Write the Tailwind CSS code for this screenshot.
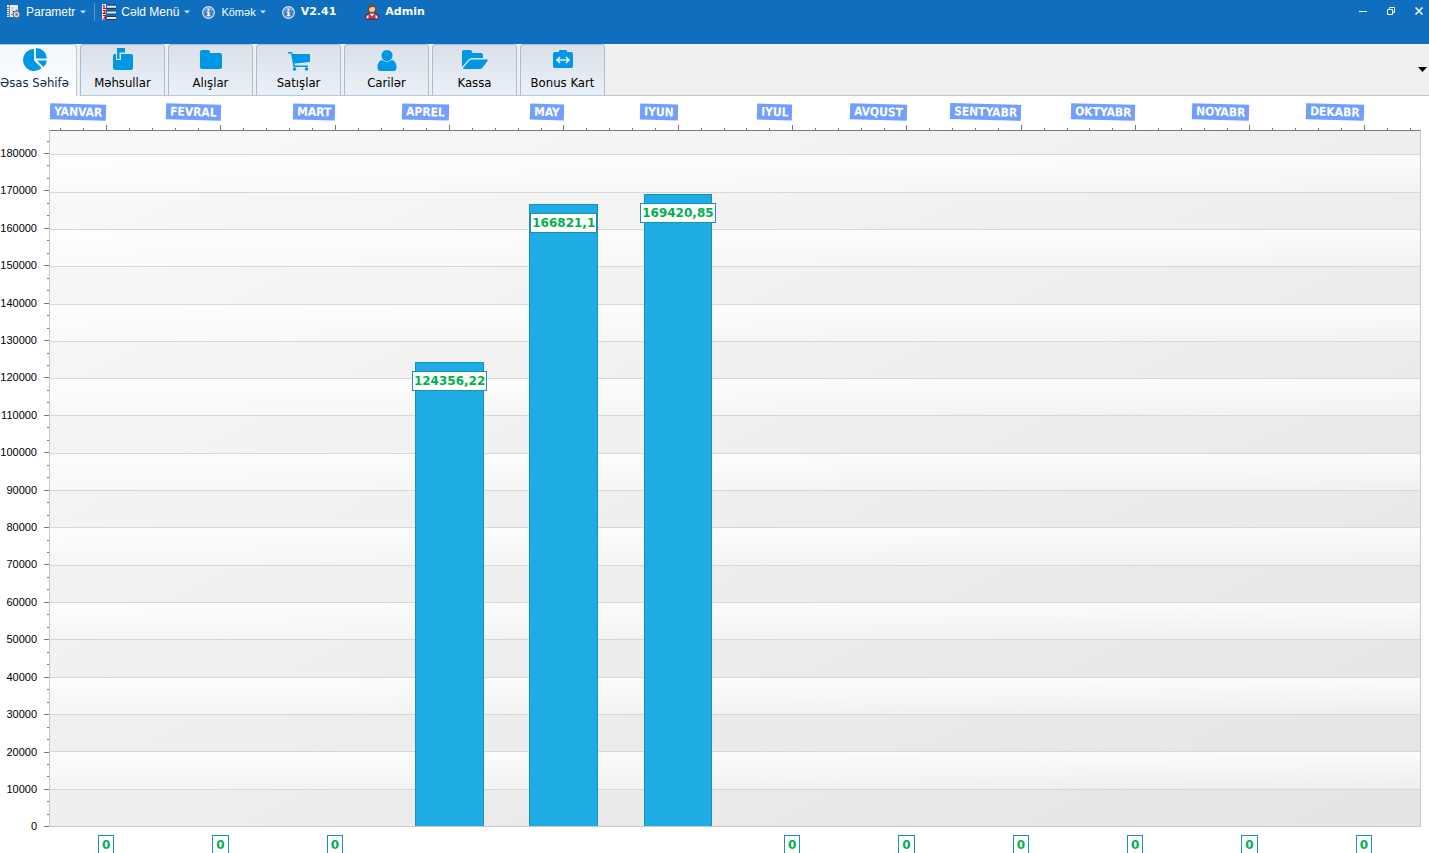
<!DOCTYPE html>
<html lang="az">
<head>
<meta charset="utf-8">
<title>Əsas Səhifə</title>
<script src="https://cdn.jsdelivr.net/npm/@tailwindcss/browser@4"></script>
</head>
<body class="h-screen overflow-hidden flex flex-col bg-white font-['DejaVu_Sans_Condensed','DejaVu_Sans',sans-serif] text-[12px] text-black">

<header class="h-11 shrink-0 bg-[#106ebe] text-white flex items-start justify-between">
  <nav class="flex items-center h-6 pl-1.5 font-['Liberation_Sans',sans-serif] text-[12px]">
    <button class="flex items-center h-full">
      <svg class="w-4 h-4 mr-1" viewBox="0 0 16 16"><path d="M1 1h11v12H1z" fill="#edf1f7"/><path d="M3.500 1v12M1 3.500h2M1 5.500h2M1 7.500h2M1 9.500h2M1 11.500h2" stroke="#6c7f9c" stroke-width="1"/><path d="M5.500 4h2M5.500 6h1" stroke="#9aa9bd"/><path d="M10.500 5.500v2m0 6v2m-5-5h2m6 0h2m-8.500-3.500 1.400 1.400m4.200 4.200 1.400 1.400m0-7-1.400 1.400m-4.200 4.200-1.400 1.400" stroke="#4f5d73" stroke-width="1.500"/><circle cx="10.500" cy="10.500" r="3.300" fill="#dce3ec" stroke="#5b6b82"/><circle cx="10.500" cy="10.500" r="1.300" fill="#58708f"/></svg>
      Parametr
      <svg class="w-[6px] h-[4px] ml-[5px]" viewBox="0 0 6 4"><path d="M0 .5h6L3 3.500z" fill="#cfe0f2"/></svg>
    </button>
    <span class="w-px h-[18px] bg-[#5a9bd5] ml-2 mr-[7px]"></span>
    <button class="flex items-center h-full">
      <svg class="w-[14px] h-4 mr-[5px]" viewBox="0 0 14 16" fill="none"><path d="M0 0h4v16H0z" fill="#f4dfe3"/><path d="M5 1h9M5 4.500h9M5 7h9M5 10h9M5 12.500h9M5 15.500h9" stroke="#26384f" stroke-width="1"/><path d="M5 2.700h9M5 8.500h9M5 14h9" stroke="#dfe9f5" stroke-width="2"/><path d="M1 1.500h1V4M1 4.500h3M1 6.500h2v1.200L1.500 9.500H4M1 11.500h2.500v1.800H2h1.500v1.900H1" stroke="#c1121f" stroke-width="1.200"/></svg>
      Cəld Menü
      <svg class="w-[6px] h-[4px] ml-[5px]" viewBox="0 0 6 4"><path d="M0 .5h6L3 3.500z" fill="#cfe0f2"/></svg>
    </button>
    <button class="flex items-center h-full ml-3 text-[11px]">
      <svg class="w-[13px] h-[13px] mr-[6px]" viewBox="0 0 14 14"><circle cx="7" cy="7" r="6.300" fill="#4a80c8" stroke="#dce7f5" stroke-width="1.300"/><path d="M3 5a4.500 4.500 0 0 1 8 0" stroke="#a4c2e8" fill="none"/><path d="M6 3h2v2H6zM5 6h3v4h1v1H5v-1h1V7H5z" fill="#fff"/></svg>
      Kömək
      <svg class="w-[6px] h-[4px] ml-1" viewBox="0 0 6 4"><path d="M0 .5h6L3 3.500z" fill="#cfe0f2"/></svg>
    </button>
    <button class="flex items-center h-full ml-4 font-bold text-[11px] font-['DejaVu_Sans',sans-serif]">
      <svg class="w-[13px] h-[13px] mr-[6px]" viewBox="0 0 14 14"><circle cx="7" cy="7" r="6.300" fill="#4a80c8" stroke="#dce7f5" stroke-width="1.300"/><path d="M3 5a4.500 4.500 0 0 1 8 0" stroke="#a4c2e8" fill="none"/><path d="M6 3h2v2H6zM5 6h3v4h1v1H5v-1h1V7H5z" fill="#fff"/></svg>
      V2.41
    </button>
    <button class="flex items-center h-full ml-7 font-bold text-[11px] font-['DejaVu_Sans',sans-serif]">
      <svg class="w-4 h-4 mr-[5px]" viewBox="0 0 16 16"><path d="M2 15v-3q0-2 3-2.500h6q3 .5 3 2.500v3z" fill="#d9303c" stroke="#5b1d22"/><path d="m5.500 9.500 2.500 3 2.500-3z" fill="#fff"/><path d="M2.500 12v2.500h2V11zM13.500 12v2.500h-2V11z" fill="#f3e4df"/><circle cx="8" cy="5" r="3.700" fill="#f7c795" stroke="#6b3d1e"/><path d="M4 5q0-4.500 4-4.500T12 5q-1-2-3-2.200Q6 3 5 5z" fill="#7d4a24"/></svg>
      Admin
    </button>
  </nav>
  <div class="flex items-center h-[22px] -mr-1">
    <button aria-label="Minimize" class="w-7 h-full flex items-center justify-center"><svg class="w-2 h-2" viewBox="0 0 8 8"><path d="M0 4.500h8" stroke="#fff"/></svg></button>
    <button aria-label="Restore" class="w-7 h-full flex items-center justify-center"><svg class="w-2 h-2" viewBox="0 0 8 8"><path d="M.5 2.500h5v5h-5zM2.500 2.500v-2h5v5h-2" fill="none" stroke="#fff"/></svg></button>
    <button aria-label="Close" class="w-7 h-full flex items-center justify-center"><svg class="w-2 h-2" viewBox="0 0 8 8"><path d="m.5.5 7 7m0-7-7 7" stroke="#fff" stroke-width="1.500"/></svg></button>
  </div>
</header>

<nav class="h-[52px] shrink-0 bg-[#f0f0f0] flex items-stretch gap-[3px] text-[13px]">
  <button class="w-[77px] pr-[7px] bg-linear-to-b from-[#f2f7fd] to-white border-r border-t border-[#b9c9dc] rounded-tr-sm flex flex-col items-center pt-[3px] text-[#14284b] whitespace-nowrap">
    <svg class="w-6 h-6" viewBox="0 0 24 24" fill="#0097e6"><path d="M11 1a11 11 0 1 0 7.600 19L11 12.500z"/><path d="M13 0a11 11 0 0 1 11 10.500H13z"/><path d="M14 12.500h10a11 11 0 0 1-3.500 6.500z"/></svg>
    <span class="leading-[22px]">Əsas Səhifə</span>
  </button>
  <div class="flex-1 flex gap-[3px] border-b border-[#b9c9dc]">
    <button class="w-[85px] bg-linear-to-b from-[#dae1ea] to-[#e9f0f8] border border-b-0 border-[#a9bbd0] rounded-t-sm flex flex-col items-center pt-[3px]">
      <svg class="w-6 h-6" viewBox="0 0 24 24"><path d="M4 6h16q2 0 2 2v12q0 2-2 2H4q-2 0-2-2V8q0-2 2-2z" fill="#0097e6"/><path d="M5 5h5v7H5z" fill="#dfe6ee"/><path d="M6 0h8v4.500H8.500V11H6z" fill="#0097e6"/></svg>
      <span class="leading-[22px]">Məhsullar</span>
    </button>
    <button class="w-[85px] bg-linear-to-b from-[#dae1ea] to-[#e9f0f8] border border-b-0 border-[#a9bbd0] rounded-t-sm flex flex-col items-center pt-[3px]">
      <svg class="w-6 h-6" viewBox="0 0 24 24" fill="#0097e6"><path d="M3 2h6q2 0 2 2v1h10q2 0 2 2v12q0 2-2 2H3q-2 0-2-2V4q0-2 2-2z"/></svg>
      <span class="leading-[22px]">Alışlar</span>
    </button>
    <button class="w-[85px] bg-linear-to-b from-[#dae1ea] to-[#e9f0f8] border border-b-0 border-[#a9bbd0] rounded-t-sm flex flex-col items-center pt-[3px]">
      <svg class="w-6 h-6" viewBox="0 0 24 24" fill="#0097e6"><path d="M1 4h4l.5 2H23v8L7.500 15.500l.3 2H21V19H6.500L4 5.500H1z"/><circle cx="7.500" cy="21" r="1.800"/><circle cx="19.500" cy="21" r="1.800"/></svg>
      <span class="leading-[22px]">Satışlar</span>
    </button>
    <button class="w-[85px] bg-linear-to-b from-[#dae1ea] to-[#e9f0f8] border border-b-0 border-[#a9bbd0] rounded-t-sm flex flex-col items-center pt-[3px]">
      <svg class="w-6 h-6" viewBox="0 0 24 24" fill="#0097e6"><circle cx="12" cy="7.500" r="5.600"/><path d="M7 12q5 3.500 10 0 4.500 1 4.500 7.500 0 3.500-3 3.500h-13q-3 0-3-3.500Q2.500 13 7 12z"/></svg>
      <span class="leading-[22px]">Carilər</span>
    </button>
    <button class="w-[85px] bg-linear-to-b from-[#dae1ea] to-[#e9f0f8] border border-b-0 border-[#a9bbd0] rounded-t-sm flex flex-col items-center pt-[3px]">
      <svg class="w-[26px] h-6" viewBox="0 0 26 24" fill="#0097e6"><path d="M2 2h6q2 0 2 2v1h9q2 0 2 2v3H10q-2 0-3.500 1.500L0 19V4q0-2 2-2z"/><path d="M10 11.500h15q1.500 0 .5 1.500l-5 6.500q-1 1.500-3 1.500H2q-1.500 0-.5-1.500l5.500-6.500q1.300-1.500 3-1.500z"/></svg>
      <span class="leading-[22px]">Kassa</span>
    </button>
    <button class="w-[85px] bg-linear-to-b from-[#dae1ea] to-[#e9f0f8] border border-b-0 border-[#a9bbd0] rounded-t-sm flex flex-col items-center pt-[3px]">
      <svg class="w-6 h-6" viewBox="0 0 24 24"><path d="M8 4V3q0-1 1-1h6q1 0 1 1v1h4q2 0 2 2v12q0 2-2 2H4q-2 0-2-2V6q0-2 2-2z" fill="#0097e6"/><path d="M7 12h10M9 9l-3 3 3 3m6-6 3 3-3 3" fill="none" stroke="#e4ebf3" stroke-width="1.700"/></svg>
      <span class="leading-[22px]">Bonus Kart</span>
    </button>
    <button aria-label="Digər bölmələr" class="ml-auto pr-[2px]"><svg class="w-[9px] h-[5px]" viewBox="0 0 9 5"><path d="M0 0h9L4.500 5z"/></svg></button>
  </div>
</nav>

<main class="flex-1 min-h-0 flex flex-col pr-2">
  <div id="months" class="h-[34px] shrink-0 ml-[49px] grid grid-cols-12"></div>
  <div class="flex-1 min-h-0 flex">
    <div id="scale" class="w-[49px] shrink-0 flex flex-col items-end font-['Liberation_Sans',sans-serif] text-[11px]"></div>
    <div class="flex-1 relative border-t border-t-[#7a7a7a] border-x border-b border-x-[#c8c8c8] border-b-[#c8c8c8] bg-linear-to-br from-[#f9f9f9] to-[#e4e4e4]">
      <div id="bands" class="absolute inset-0 flex flex-col"></div>
      <div id="bars" class="absolute inset-0 grid grid-cols-12"></div>
    </div>
  </div>
  <div id="zeros" class="h-[26px] shrink-0 overflow-hidden ml-[49px] pt-2 grid grid-cols-12"></div>
</main>

<script>
const data = [['YANVAR',0],['FEVRAL',0],['MART',0],['APREL',124356.22],['MAY',166821.1],['IYUN',169420.85],['IYUL',0],['AVQUST',0],['SENTYABR',0],['OKTYABR',0],['NOYABR',0],['DEKABR',0]];
const max = 186400, step = 10000;
const fill = (id, html) => document.getElementById(id).innerHTML = html;

fill('months', data.map(([m]) => `
  <div class="flex flex-col justify-between pt-2">
    <div class="w-1/2 flex justify-end"><span class="rotate-[1.500deg] bg-[#729fff] text-white font-bold text-[12px] leading-[16px] px-1">${m}</span></div>
    <div class="grid grid-cols-10 items-end h-[5px]">
      <i class="col-start-2 h-[2px] border-l border-[#7a7a7a]"></i><i class="col-start-4 h-[2px] border-l border-[#7a7a7a]"></i><i class="col-start-6 h-[5px] border-l border-[#7a7a7a]"></i><i class="col-start-8 h-[2px] border-l border-[#7a7a7a]"></i><i class="col-start-10 h-[2px] border-l border-[#7a7a7a]"></i>
    </div>
  </div>`).join(''));

// Three ticks per step; the strip above the top gridline is partial.
const minor = g => `<div class="w-[2px] border-b border-[#7a7a7a]" style="flex:${g} 1 0px"></div>`;
const major = v => `<div class="w-[5px] border-b border-[#7a7a7a] relative" style="flex:1 1 0px"><span class="absolute right-[12px] bottom-0 translate-y-1/2 leading-[12px]">${v}</span></div>`;
const top_ = (max % step) / step;
let s = minor(top_ * 3 - 1) + major(180000);
for (let v = 170000; v >= 0; v -= step) s += minor(1) + minor(1) + major(v);
fill('scale', s);

let b = `<div class="border-b border-[#d8d8d8]" style="flex:${top_} 1 0px"></div>`;
for (let i = 0; i < 18; i++) b += i % 2
  ? '<div class="flex-1 border-b border-[#d8d8d8] last:border-b-0"></div>'
  : '<div class="flex-1 border-b border-[#d8d8d8] bg-linear-to-b from-white/85 to-white/35"></div>';
fill('bands', b);

fill('bars', data.map(([, v]) => `<div class="flex justify-center items-end">${v ? `
  <div class="w-3/5 bg-[#1eace4] border border-b-0 border-[#1b8fc0] flex justify-center items-start pt-2" style="height:${v / max * 100}%"><span class="shrink-0 bg-white border border-[#1b8fc0] text-[#00b050] font-bold font-['DejaVu_Sans',sans-serif] text-[12px] leading-[18px] px-[1px]">${String(v).replace('.', ',')}</span></div>` : ''}</div>`).join(''));

fill('zeros', data.map(([, v]) => `<div class="flex justify-center items-start">${v ? '' : `<span class="border border-[#1b8fc0] text-[#00b050] font-bold font-['DejaVu_Sans',sans-serif] text-[12px] leading-[19px] px-[3px]">0</span>`}</div>`).join(''));
</script>
</body>
</html>
